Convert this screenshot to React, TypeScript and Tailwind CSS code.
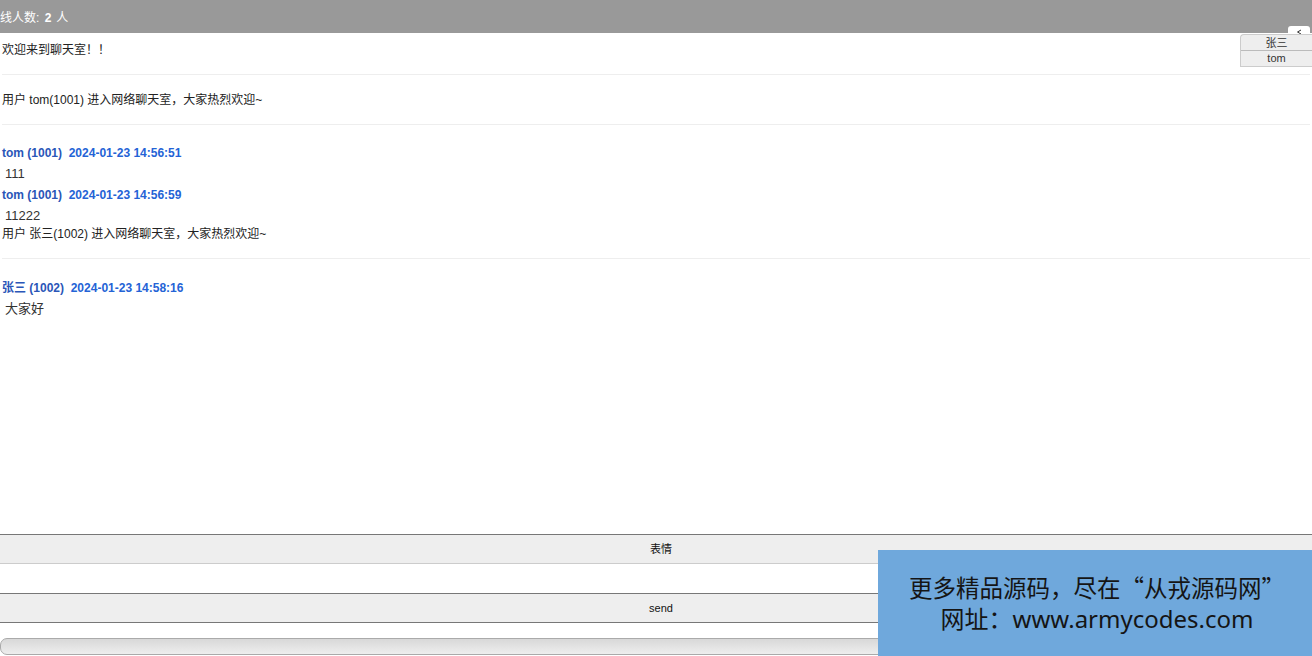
import React from "react";

const FONT = { fontFamily: '"Liberation Sans", "Noto Sans CJK SC", sans-serif' };

type Chat = { name: string; time: string; text: string };

function ChatItem({ c, first }: { c: Chat; first?: boolean }) {
  return (
    <>
      <div className={`pt-[1px] leading-[16px] font-bold text-[12px] whitespace-pre ${first ? "" : "mt-[4px]"}`}>
        <span className="text-[#2a56b8]">{c.name}</span>
        <span className="text-[#2463d6]">{"  " + c.time}</span>
      </div>
      <div className="mt-[4px] pt-[1px] pl-[3px] leading-[16px] text-[13px] text-[#333]">{c.text}</div>
    </>
  );
}

export default function App() {
  return (
    <div className="relative flex h-[656px] w-full flex-col overflow-hidden bg-white text-[12px] text-[#222]" style={FONT}>
      {/* 顶部 */}
      <div className="flex h-[33px] shrink-0 items-center overflow-hidden whitespace-nowrap bg-[#999] pt-[3px] text-[12px] text-white">
        <span className="ml-[-12px] whitespace-pre">在线人数: </span>
        <b className="ml-[2px]">2</b>
        <span className="ml-[5px]">人</span>
      </div>

      {/* 消息区 */}
      <div className="relative flex-1 px-[2px]">
        <div className="border-b border-[#eee] pt-[9px] pb-[16px] leading-[16px]">欢迎来到聊天室！！</div>
        <div className="border-b border-[#eee] pt-[17px] pb-[16px] leading-[16px]">
          用户 tom(1001) 进入网络聊天室，大家热烈欢迎~
        </div>
        <div className="mt-[19px]">
          <ChatItem first c={{ name: "tom (1001)", time: "2024-01-23 14:56:51", text: "111" }} />
          <ChatItem c={{ name: "tom (1001)", time: "2024-01-23 14:56:59", text: "11222" }} />
        </div>
        <div className="mt-[1px] border-b border-[#eee] pt-[1px] pb-[16px] leading-[16px]">
          用户 张三(1002) 进入网络聊天室，大家热烈欢迎~
        </div>
        <div className="mt-[20px]">
          <ChatItem first c={{ name: "张三 (1002)", time: "2024-01-23 14:58:16", text: "大家好" }} />
        </div>

        {/* 在线用户列表 */}
        <div className="absolute right-[2px] top-[-7px] flex h-[11px] w-[22px] items-center justify-center rounded-t-[3px] bg-white">
          <svg width="6" height="6" viewBox="0 0 6 6">
            <path d="M5 1 L1.5 3 L5 5" fill="none" stroke="#333" strokeWidth="1" />
          </svg>
        </div>
        <div className="absolute right-0 top-[1px] w-[72px] overflow-hidden rounded-tl-[4px] border border-r-0 border-[#ccc] bg-[#eee] text-center text-[11px] text-[#333]">
          <div className="h-[16px] border-b border-[#bbb] leading-[16px]">张三</div>
          <div className="h-[15px] leading-[15px]">tom</div>
        </div>
      </div>

      {/* 底部输入 */}
      <div className="shrink-0">
        <button className="block h-[30px] w-full border-t border-b border-t-[#777] border-b-[#ccc] bg-[#eee] pl-[10px] pt-[1px] text-center text-[11px] text-[#111]">
          表情
        </button>
        <input className="block h-[29px] w-full bg-white outline-none" />
        <button className="block h-[30px] w-full border-y border-[#777] bg-[#eee] pl-[10px] pt-[1px] text-center text-[11px] text-[#111]">
          send
        </button>
        <div className="mt-[15px] mb-[1px] h-[17px] w-full rounded-[7px] border border-[#aaa] bg-gradient-to-b from-[#d8d8d8] to-[#eee]" />
      </div>

      {/* 水印 */}
      <div className="absolute bottom-0 right-0 flex h-[106px] w-[434px] flex-col items-center justify-center bg-[#6fa8dc] pl-[4px] text-[24px] leading-[31px] text-[#151515]">
        <div className="text-[23.5px]" style={{ fontFamily: '"Noto Sans CJK SC", sans-serif' }}>
          更多精品源码，尽在“从戎源码网”
        </div>
        <div style={{ fontFamily: '"Noto Sans", "Noto Sans CJK SC", sans-serif' }}>网址：www.armycodes.com</div>
      </div>
    </div>
  );
}
